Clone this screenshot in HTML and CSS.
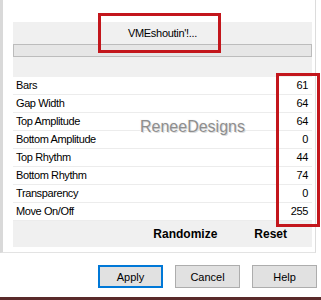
FILE: index.html
```html
<!DOCTYPE html>
<html lang="en">
<head>
    <meta charset="UTF-8">
    <meta name="viewport" content="width=device-width, initial-scale=1.0">
    <title>VMEshoutin'!</title>
    <link rel="stylesheet" href="styles.css">
</head>
<body>
    <div class="dialog">
        <div class="main">
            <div class="panel">
                <div class="title">VMEshoutin'!...</div>
                <div class="progress"></div>

                <div class="params">
                    <div class="row"><span>Bars</span><span>61</span></div>
                    <div class="row"><span>Gap Width</span><span>64</span></div>
                    <div class="row"><span>Top Amplitude</span><span>64</span></div>
                    <div class="row"><span>Bottom Amplitude</span><span>0</span></div>
                    <div class="row"><span>Top Rhythm</span><span>44</span></div>
                    <div class="row"><span>Bottom Rhythm</span><span>74</span></div>
                    <div class="row"><span>Transparency</span><span>0</span></div>
                    <div class="row"><span>Move On/Off</span><span>255</span></div>
                </div>

                <div class="actions">
                    <span>Randomize</span>
                    <span>Reset</span>
                </div>

                <div class="watermark">ReneeDesigns</div>
            </div>
        </div>

        <div class="buttons">
            <button class="btn btn-default">Apply</button>
            <button class="btn">Cancel</button>
            <button class="btn">Help</button>
        </div>

        <div class="taskbar"></div>

        <!-- red highlight boxes drawn over the screenshot -->
        <div class="mark mark-title"></div>
        <div class="mark mark-values"></div>
    </div>
</body>
</html>
```

FILE: styles.css
```css
body {
    margin: 0;
    background-color: #fff;
    font-family: "Liberation Sans", Arial, sans-serif;
    font-size: 11px;
    color: #000;
}

.dialog {
    position: relative;
    width: 321px;
    height: 300px;
    overflow: hidden;
}

.main {
    box-sizing: border-box;
    width: 316px;
    height: 253px;
    padding: 22px 0 0 10px;
    border-left: 3px solid #d9d9d9;
    border-right: 1px solid #dcdcdc;
    border-bottom: 1px solid #e3e3e3;
}

.panel {
    position: relative;
    width: 299px;
    height: 225px;
    background-color: #f0f0f0;
}

.title {
    height: 22px;
    line-height: 22px;
    text-align: center;
    letter-spacing: -0.3px;
}

.progress {
    box-sizing: border-box;
    height: 13px;
    margin-bottom: 20px;
    border: 1px solid #bcbcbc;
    background-color: #e6e6e6;
}

.params {
    background-color: #fff;
}

.row {
    display: flex;
    justify-content: space-between;
    height: 17px;
    line-height: 17px;
    padding: 0 4px 0 3px;
    border-bottom: 1px solid #ececec;
    letter-spacing: -0.4px;
}

.actions {
    display: flex;
    justify-content: flex-end;
    gap: 37px;
    height: 26px;
    line-height: 26px;
    padding-right: 25px;
    font-size: 12px;
    font-weight: bold;
}

.watermark {
    position: absolute;
    left: 127px;
    top: 96px;
    font-size: 16px;
    color: #8e8e8e;
    text-shadow: 1px 1px 0 #dcdcdc, -1px -1px 0 #fafafa;
}

.buttons {
    display: flex;
    justify-content: flex-end;
    gap: 12px;
    height: 44px;
    padding: 12px 4px 0 0;
    box-sizing: border-box;
}

.btn {
    box-sizing: border-box;
    width: 65px;
    height: 23px;
    padding: 0;
    border: 1px solid #adadad;
    background-color: #e1e1e1;
    font-family: "Liberation Sans", Arial, sans-serif;
    font-size: 11px;
    color: #000;
}

.btn-default {
    border: 2px solid #0078d7;
}

.taskbar {
    height: 3px;
    background-color: #5a2a2a;
}

.mark {
    position: absolute;
    box-sizing: border-box;
    border: 3px solid #c3161c;
}

.mark-title {
    left: 98px;
    top: 13px;
    width: 123px;
    height: 40px;
}

.mark-values {
    left: 276px;
    top: 73px;
    width: 44px;
    height: 154px;
}
```
